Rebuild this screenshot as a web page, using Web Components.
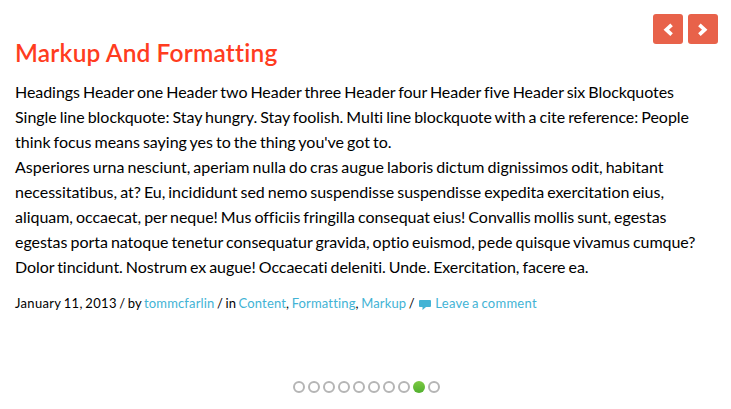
<!DOCTYPE html>
<html lang="en"><head><meta charset="utf-8"><title>Posts</title>
<style>
html,body{margin:0;background:#fff}
body{font-family:Lato,sans-serif;color:#000;font-variant-ligatures:none}
</style></head><body>
<post-slider></post-slider>
<script>
class SliderArrow extends HTMLElement{
 constructor(){super();this.attachShadow({mode:'open'}).innerHTML=`<style>
 :host{display:block;width:30px;height:30px;background:#e8624a;border-radius:3px}
 :host([next]) svg{transform:scaleX(-1)}
 svg{display:block;width:30px;height:30px}</style>
 <svg viewBox="0 0 30 30"><path d="M18.6 10.8L13.3 15.7L18.6 20.6" fill="none" stroke="#fff" stroke-width="3.7"/></svg>`}
}
class PagerDots extends HTMLElement{
 constructor(){super();this.attachShadow({mode:'open'})}
 connectedCallback(){const n=+this.getAttribute('count'),a=+this.getAttribute('active');
 this.shadowRoot.innerHTML=`<style>:host{display:flex;gap:3px;justify-content:center}
 i{box-sizing:border-box;width:12px;height:12px;border:2px solid #b5b5b5;border-radius:50%}
 i.on{border:0;background:linear-gradient(#7cc942,#52b030)}</style>`+Array.from({length:n},(_,k)=>`<i class="${k===a?'on':''}"></i>`).join('')}
}
class PostMeta extends HTMLElement{
 constructor(){super();this.attachShadow({mode:'open'}).innerHTML=`<style>
 :host{display:block;font-size:13px;line-height:20px;white-space:nowrap;letter-spacing:.15px;word-spacing:-1px}
 ::slotted(time){letter-spacing:.32px}
 ::slotted(a){color:#42b3d5;text-decoration:none}
 ::slotted(a[slot]){letter-spacing:.28px}
 svg{width:12px;height:10px;margin:0 4px 0 2px;vertical-align:-2px}</style>
 <slot></slot> <svg viewBox="0 0 12 10"><path d="M1 0H11Q12 0 12 1V6Q12 7 11 7H7L3.5 10V7H1Q0 7 0 6V1Q0 0 1 0z" fill="#42b3d5"/></svg><slot name="comment"></slot>`}
}
class TextLine extends HTMLElement{
 constructor(){super();this.attachShadow({mode:'open'}).innerHTML=`<style>
 :host{display:block;width:max-content;white-space:nowrap}</style><slot></slot>`}
 connectedCallback(){
  const target=+this.getAttribute('measure'),chars=this.textContent.length;
  this.style.letterSpacing=(target-this.getBoundingClientRect().width)/chars+'px';
 }
}
class PostSlider extends HTMLElement{
 constructor(){super();this.attachShadow({mode:'open'}).innerHTML=`<style>
 :host{display:flex;flex-direction:column;box-sizing:border-box;width:731px;height:409px;padding:14px 13px 16px 15px;overflow:hidden}
 nav{display:flex;gap:5px;justify-content:flex-end}
 h2{margin:-9px 0 0;font-size:24.5px;line-height:36px;font-weight:600;color:#ff3c20;word-spacing:-.5px}
 .body{margin-top:8px;font-size:16px;line-height:25px;word-spacing:-1px}
 post-meta{margin-top:14px}
 pager-dots{margin-top:auto}
 </style>
 <nav><slider-arrow></slider-arrow><slider-arrow next></slider-arrow></nav>
 <h2><text-line measure="262.5">Markup And Formatting</text-line></h2>
 <div class="body"><text-line measure="659">Headings Header one Header two Header three Header four Header five Header six Blockquotes</text-line><text-line measure="674">Single line blockquote: Stay hungry. Stay foolish. Multi line blockquote with a cite reference: People</text-line><text-line measure="376.5">think focus means saying yes to the thing you've got to.</text-line><text-line measure="648.5">Asperiores urna nesciunt, aperiam nulla do cras augue laboris dictum dignissimos odit, habitant</text-line><text-line measure="649">necessitatibus, at? Eu, incididunt sed nemo suspendisse suspendisse expedita exercitation eius,</text-line><text-line measure="651.5">aliquam, occaecat, per neque! Mus officiis fringilla consequat eius! Convallis mollis sunt, egestas</text-line><text-line measure="680.5">egestas porta natoque tenetur consequatur gravida, optio euismod, pede quisque vivamus cumque?</text-line><text-line measure="573.5">Dolor tincidunt. Nostrum ex augue! Occaecati deleniti. Unde. Exercitation, facere ea.</text-line></div>
 <post-meta><time>January 11, 2013</time> / by <a>tommcfarlin</a> / in <a>Content</a>, <a>Formatting</a>, <a>Markup</a> /<a slot="comment">Leave a comment</a></post-meta>
 <pager-dots count="10" active="8"></pager-dots>`}
}
customElements.define('slider-arrow',SliderArrow);
customElements.define('pager-dots',PagerDots);
customElements.define('post-meta',PostMeta);
customElements.define('text-line',TextLine);
customElements.define('post-slider',PostSlider);
</script></body></html>
